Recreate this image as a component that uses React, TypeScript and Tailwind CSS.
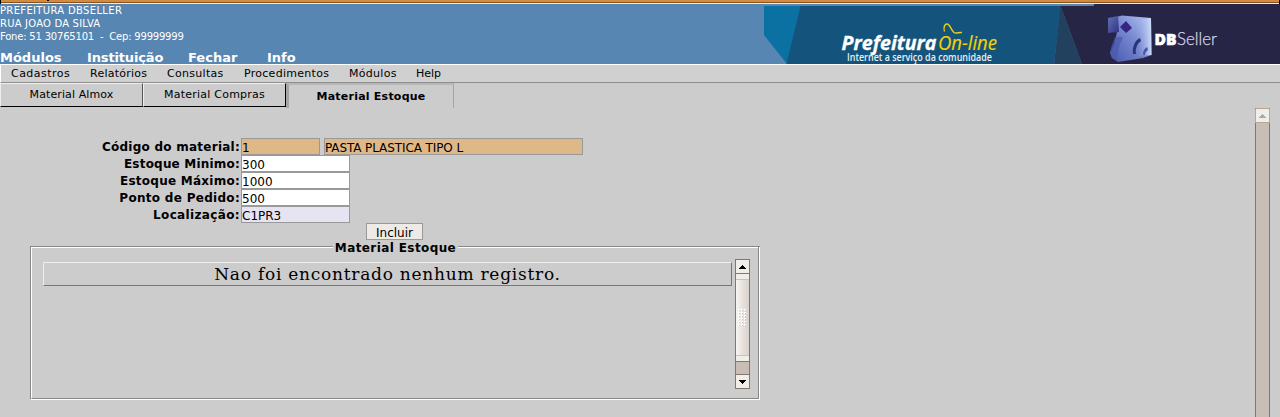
const sans = "font-['DejaVu_Sans',sans-serif]";

const sections = [
  { label: 'Módulos', cls: 'w-[87px]' },
  { label: 'Instituição', cls: 'w-[101px] tracking-[-0.14px]' },
  { label: 'Fechar', cls: 'w-[79px]' },
  { label: 'Info', cls: 'w-[40px]' },
];

const menus = [
  { label: 'Cadastros', cls: 'w-[79px] tracking-[0.46px]' },
  { label: 'Relatórios', cls: 'w-[77px] tracking-[0.25px]' },
  { label: 'Consultas', cls: 'w-[77px] tracking-[0.3px]' },
  { label: 'Procedimentos', cls: 'w-[105px] tracking-[0.28px]' },
  { label: 'Módulos', cls: 'w-[67px] tracking-[0.3px]' },
  { label: 'Help', cls: 'w-[40px]' },
];

const fields = [
  { label: 'Código do material:', value: '1', track: 'tracking-[0.25px]', box: 'w-[79px] bg-[#deb887]', extra: 'PASTA PLASTICA TIPO L' },
  { label: 'Estoque Minimo:', value: '300', track: 'tracking-[0.2px]', box: 'w-[109px] bg-white' },
  { label: 'Estoque Máximo:', value: '1000', track: 'tracking-[0.25px]', box: 'w-[109px] bg-white' },
  { label: 'Ponto de Pedido:', value: '500', track: 'tracking-[0.3px]', box: 'w-[109px] bg-white' },
  { label: 'Localização:', value: 'C1PR3', track: 'tracking-[0.36px]', box: 'w-[109px] bg-[#e6e4f1]' },
];

function Banner() {
  return (
    <svg width="516" height="60" viewBox="764 4 516 60" className="block shrink-0">
      <defs>
        <linearGradient id="cube" x1="0" y1="1" x2="1" y2="0">
          <stop offset="0" stopColor="#4a57ad" />
          <stop offset="0.5" stopColor="#7585cf" />
          <stop offset="1" stopColor="#b9c9f2" />
        </linearGradient>
        <linearGradient id="cubeSide" x1="0" y1="0" x2="1" y2="1">
          <stop offset="0" stopColor="#6470b4" />
          <stop offset="1" stopColor="#2d3182" />
        </linearGradient>
        <linearGradient id="shine" x1="0" y1="0" x2="1" y2="0">
          <stop offset="0" stopColor="#8fa5e6" stopOpacity="0" />
          <stop offset="1" stopColor="#d3e1fb" stopOpacity="0.9" />
        </linearGradient>
      </defs>
      <path d="M764 6H801L787 64L764 35Z" fill="#0b70a2" />
      <path d="M800.500 6H1061L1054 64H786.500Z" fill="#14547c" />
      <path d="M1060.500 6L1082 64H1054Z" fill="#22415f" />
      <path d="M1060.500 6H1094V4H1280V64H1082Z" fill="#262545" />
      <text x="841.500" y="49.500" textLength="95" lengthAdjust="spacingAndGlyphs" fill="#fff" stroke="#fff" strokeWidth="0.300" fontFamily="Open Sans" fontWeight="700" fontStyle="italic" fontSize="19.500">Prefeitura</text>
      <text x="938" y="49.500" textLength="59" lengthAdjust="spacingAndGlyphs" fill="#f2d200" stroke="#f2d200" strokeWidth="0.200" fontFamily="Open Sans" fontStyle="italic" fontSize="20.500">On-line</text>
      <path d="M944.500 31.500C943 27 945 23.500 947.500 24C950 24.500 951 30 954 32.500C956 34 959 32 962 32.500" fill="none" stroke="#e9cf12" strokeWidth="1.400" />
      <text x="847" y="60.500" textLength="145" lengthAdjust="spacingAndGlyphs" fill="#e8f0f5" fontFamily="Open Sans" fontWeight="600" fontSize="9.800">Internet a serviço da comunidade</text>
      <path d="M1116 17L1122 15.500L1151 18L1151.500 55L1143 58L1118 62L1112 58L1110 53L1114 45L1117 32Z" fill="url(#cube)" />
      <path d="M1108 18L1118 16L1119 32L1108 33Z" fill="url(#cubeSide)" />
      <path d="M1137 19L1151 18L1151.500 55L1137 56Z" fill="url(#shine)" />
      <path d="M1110 53C1111 46 1113 43 1115 37C1119 37 1122 36 1123 38C1119 45 1117 52 1118 62L1112 58Z" fill="#4c59ad" opacity="0.7" />
      <path d="M1126 21L1132 28L1126 33L1120 27Z" fill="#36267f" />
      <path d="M1133 54C1132 47 1135 40 1140 38L1141 41C1137 44 1135 49 1136 54Z" fill="#29357f" />
      <path d="M1143 55C1143 51 1144 49 1147 47L1148 50C1146 51 1145 53 1145 55Z" fill="#4359a7" />
      <text x="1154.500" y="45.300" textLength="22" lengthAdjust="spacingAndGlyphs" fill="#fff" stroke="#fff" strokeWidth="0.600" fontFamily="Open Sans" fontWeight="800" fontSize="16.500">DB</text>
      <text x="1177" y="45.300" textLength="40" lengthAdjust="spacingAndGlyphs" fill="#d4d4e2" stroke="#d4d4e2" strokeWidth="0.250" fontFamily="Lato" fontWeight="300" fontSize="17">Seller</text>
    </svg>
  );
}

function Arrow({ down = false, faded = false }: { down?: boolean; faded?: boolean }) {
  return (
    <svg width="7" height="4" viewBox="0 0 7 4" className={down ? 'rotate-180' : ''} shapeRendering="crispEdges">
      <path d="M3 0H4V1H5V2H6V3H7V4H0V3H1V2H2V1H3Z" fill={faded ? '#aaa9a3' : '#000'} />
    </svg>
  );
}

function InnerScrollbar() {
  return (
    <div className="flex h-[130px] w-[15px] flex-col border border-[#84766b] bg-[#c9beb5]">
      <div className="flex h-[14px] items-center justify-center border-b border-[#84766b] bg-[#f1eeea]"><Arrow /></div>
      <div className="flex h-[88px] flex-col justify-between border-b border-[#84766b] bg-linear-to-r from-[#f7f5f3] to-[#d9d0ca]">
        <div className="h-[6px] border-b border-[#c9c1bb] bg-[#f1eeea]" />
        <svg width="9" height="18" viewBox="0 0 9 18" className="mx-auto" shapeRendering="crispEdges">
          {[0, 3, 6, 9, 12, 15].map((y) => [0, 3, 6].map((x) => (
            <g key={`${x}-${y}`}><rect x={x} y={y} width="2" height="2" fill="#fff" /><rect x={x + 1} y={y + 1} width="1" height="1" fill="#c9c0b9" /></g>
          )))}
        </svg>
        <div className="h-[6px] border-t border-[#c9c1bb] bg-[#f1eeea]" />
      </div>
      <div className="h-[12px]" />
      <div className="flex h-[14px] items-center justify-center border-t border-[#84766b] bg-[#f1eeea]"><Arrow down /></div>
    </div>
  );
}

export default function App() {
  return (
    <div className={`flex h-[417px] w-[1280px] flex-col overflow-hidden bg-[#ccc] text-black ${sans}`}>
      <div className="flex h-[4px] shrink-0 bg-black">
        <div className="ml-px w-[1278px] border-b border-[#fbe9d5] bg-[#d38b42]">
          <div className="h-[2px]"><div className="ml-[46px] h-px w-[2px] bg-black" /></div>
          <div className="h-px bg-[#8a5420]" />
        </div>
      </div>
      <header className="flex h-[60px] shrink-0 justify-between bg-[#5786b2] text-white">
        <div>
          <div className="text-[10px] leading-[13px] whitespace-pre">
            <div className="tracking-[0.34px]">PREFEITURA DBSELLER</div>
            <div className="tracking-[0.2px]">RUA JOAO DA SILVA</div>
            <div className="tracking-[-0.2px]">{'Fone: 51 30765101  -  Cep: 99999999'}</div>
          </div>
          <nav className="mt-[8px] flex text-[13px] leading-[13px] font-bold">
            {sections.map((s) => <a key={s.label} className={s.cls}>{s.label}</a>)}
          </nav>
        </div>
        <Banner />
      </header>
      <nav className="flex h-[19px] shrink-0 border-t border-b border-l border-t-white border-b-[#8f8f8f] border-l-white bg-[#d0d0d0] pl-[10px] text-[11px] leading-[17px]">
        {menus.map((m) => <a key={m.label} className={m.cls}>{m.label}</a>)}
      </nav>
      <div className="flex grow">
        <main className="w-[1255px]">
          <div className="flex h-[25px] text-[11px]">
            <div className="h-[24px] w-[143px] border border-t-[#eee] border-r-[#555] border-b-black border-l-[#eee] text-center leading-[21px] tracking-[0.1px]">Material Almox</div>
            <div className="h-[24px] w-[143px] border border-t-[#eee] border-r-black border-b-black border-l-[#eee] text-center leading-[21px] tracking-[0.24px]">Material Compras</div>
            <div className="h-[25px] w-[168px] border-t-2 border-r border-l-[3px] border-t-[#b7b7b7] border-r-[#a5a5a5] border-l-[#a5a5a5] text-center leading-[23px] font-bold tracking-[0.23px]">Material Estoque</div>
          </div>
          <form className="mt-[30px] text-[12px]">
            {fields.map((f) => (
              <div key={f.label} className="flex h-[17px]">
                <label className={`mr-px w-[240px] text-right leading-[19px] font-bold ${f.track}`}>{f.label}</label>
                <div className={`h-[17px] border border-[#999] leading-[18px] ${f.box}`}>{f.value}</div>
                {f.extra && <div className="ml-[4px] h-[17px] w-[259px] border border-[#999] bg-[#deb887] leading-[18px] tracking-[-0.1px]">{f.extra}</div>}
              </div>
            ))}
            <button type="button" className="ml-[366px] block h-[17px] w-[57px] border border-[#999] bg-[#eeebe7] text-center leading-[18px]">Incluir</button>
          </form>
          <fieldset className="ml-[30px] flex h-[160px] w-[730px] flex-col">
            <div className="flex h-[7px] shrink-0">
              <div className="mt-[6px] h-px w-[303px] bg-[#888]" />
              <div className="w-[125px] text-center text-[12px] leading-[16px] font-bold tracking-[0.4px] whitespace-nowrap">Material Estoque</div>
              <div className="mt-[6px] h-px grow bg-[#888]" />
            </div>
            <div className="h-[153px] shrink-0 border-r border-b border-l border-r-white border-b-white border-l-[#888]">
              <div className="relative flex h-full border-r border-b border-l border-r-[#888] border-b-[#888] border-l-white pl-[11px]">
                <div className="absolute top-0 left-0 flex w-[726px] justify-between">
                  <div className="h-px w-[301px] bg-white" />
                  <div className="h-px w-[300px] bg-white" />
                </div>
                <div className="mt-[15px] h-[24px] w-[689px] border border-t-[#eee] border-r-[#777] border-b-[#777] border-l-[#eee] text-center font-['DejaVu_Serif',serif] text-[17px] leading-[22px] tracking-[0.75px]">Nao foi encontrado nenhum registro.</div>
                <div className="mt-[12px] ml-[3px]"><InnerScrollbar /></div>
              </div>
            </div>
          </fieldset>
        </main>
        <div className="mt-[25px] w-[15px] border-x border-t border-[#84766b] border-t-[#b5a699] bg-[#c9beb5]">
          <div className="mx-[-1px] flex h-[14px] items-center justify-center border-x border-b border-[#b5a699] bg-[#efeee9]"><Arrow faded /></div>
        </div>
      </div>
    </div>
  );
}
